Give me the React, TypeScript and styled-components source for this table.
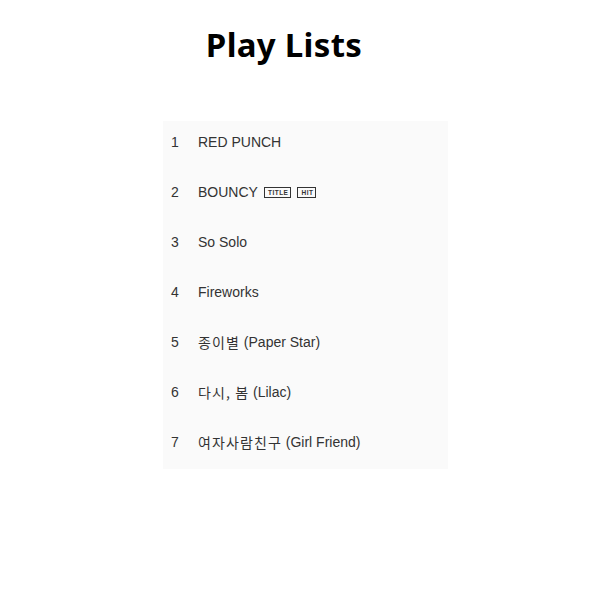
import React from 'react'
import styled, { createGlobalStyle } from 'styled-components'

// Types
type Track = { no: number; ko?: string; title: string; tags?: string[] }

const tracks: Track[] = [
  { no: 1, title: 'RED PUNCH' },
  { no: 2, title: 'BOUNCY', tags: ['TITLE', 'HIT'] },
  { no: 3, title: 'So Solo' },
  { no: 4, title: 'Fireworks' },
  { no: 5, ko: '종이별', title: '(Paper Star)' },
  { no: 6, ko: '다시, 봄', title: '(Lilac)' },
  { no: 7, ko: '여자사람친구', title: '(Girl Friend)' },
]

export default function App(): JSX.Element {
  return (
    <>
      <GlobalStyle />
      <StyledPage>
        <Header>
          <h1>Play Lists</h1>
        </Header>

        <TrackList>
          {tracks.map((t) => (
            <TrackRow key={t.no}>
              <TrackNo>{t.no}</TrackNo>
              <TrackTitle>
                {t.ko && <KoText>{t.ko}</KoText>}
                {t.ko ? '\u00a0' : ''}
                {t.title}
                {t.tags?.map((tag) => (
                  <Tag key={tag}>{tag}</Tag>
                ))}
              </TrackTitle>
            </TrackRow>
          ))}
        </TrackList>
      </StyledPage>
    </>
  )
}

const GlobalStyle = createGlobalStyle`
  html, body {
    margin: 0;
    padding: 0;
    background: #ffffff;
  }
`

const StyledPage = styled.div`
  width: 600px;
  height: 600px;
  display: flex;
  flex-direction: column;
  font-family: 'Liberation Sans', Arial, 'Noto Sans CJK KR', sans-serif;
`

const Header = styled.div`
  display: flex;
  justify-content: center;
  padding: 21px 32px 0 0;

  h1 {
    margin: 0;
    font-family: 'Noto Sans', 'Noto Sans CJK KR', sans-serif;
    font-size: 33px;
    font-weight: 700;
    line-height: 48px;
    color: #000;
    letter-spacing: 0.3px;
  }
`

const TrackList = styled.ul`
  list-style: none;
  margin: 52px 0 0 163px;
  padding: 0;
  width: 285px;
  background: #fafafa;
`

const TrackRow = styled.li`
  display: flex;
  align-items: flex-start;
  height: 50px;
  box-sizing: border-box;
  padding-top: 13px;
  font-size: 14px;
  line-height: 16px;
  color: #333;

  &:last-child {
    height: 48px;
  }
`

const TrackNo = styled.span`
  width: 35px;
  padding-left: 8px;
  box-sizing: border-box;
`

const TrackTitle = styled.span`
  display: flex;
  align-items: center;
  white-space: nowrap;
`

const KoText = styled.span`
  font-family: 'Noto Sans CJK KR', sans-serif;
  letter-spacing: 1.1px;
`

const Tag = styled.span`
  display: inline-block;
  margin-left: 6px;
  padding: 0 2px 0 3px;
  height: 9px;
  line-height: 9px;
  border: 1px solid #333;
  font-size: 6.5px;
  font-weight: 700;
  letter-spacing: 0.5px;
  color: #333;

  & + & {
    margin-left: 6px;
  }
`
